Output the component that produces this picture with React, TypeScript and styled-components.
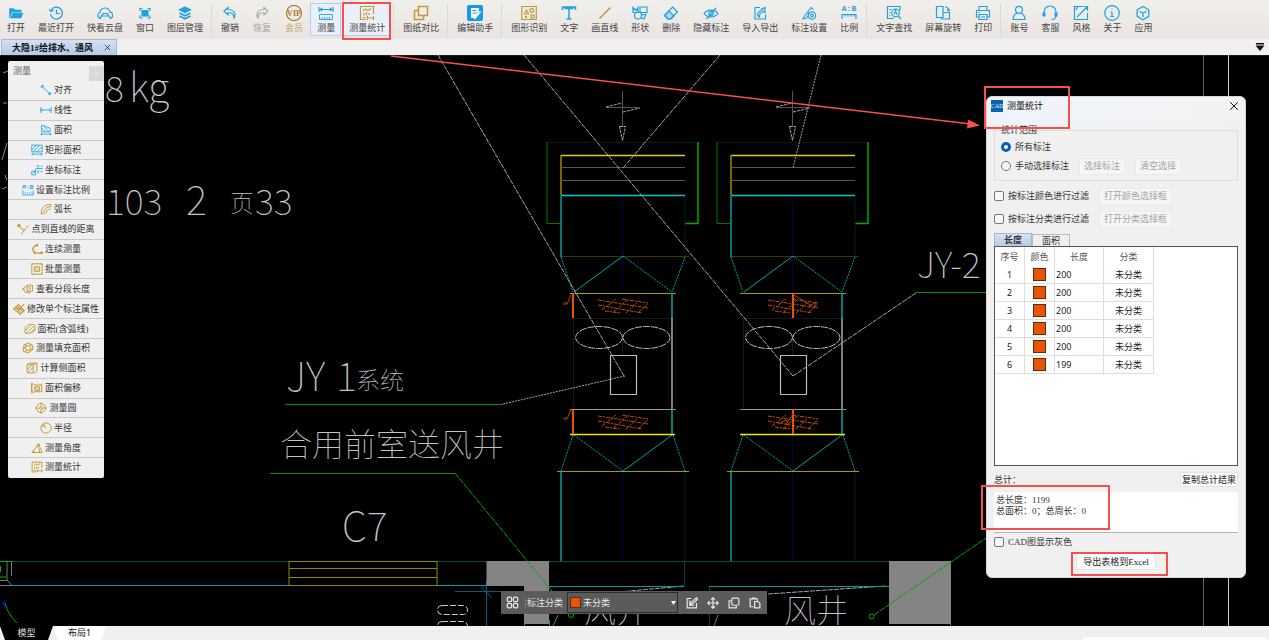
import React from 'react';
import styled, { createGlobalStyle, css } from 'styled-components';

const BLUE = '#1fa3e0';
const GOLD = '#c4993c';
const MARK = '#f4504f';

const GlobalStyle = createGlobalStyle`
  *, *::before, *::after { box-sizing: border-box; }
  body {
    margin: 0;
    background: #efefef;
    color: #333;
    font: 9px/10px "Liberation Serif", "Noto Sans CJK SC", serif;
  }
  button, input, select, textarea { font: inherit; color: inherit; margin: 0; }
`;

const Page = styled.div`
  display: flex;
  flex-direction: column;
  min-height: 100vh;
  overflow: hidden;
`;

/* ---------- top tool bar ---------- */

const Toolbar = styled.header`
  display: flex;
  align-items: flex-start;
  height: 39px;
  padding: 3px 0 0;
  background: linear-gradient(#f0efec, #ebe4e1);
`;

const ToolGroup = styled.div<{ $gap?: number }>`
  display: flex;
  gap: ${(p) => p.$gap ?? 0}px;
`;

const Divider = styled.span`
  flex: none;
  width: 1px;
  height: 34px;
  margin: 0 2px;
  background: #dcd9d6;
`;

const ToolButton = styled.button<{ $tone: string; $on?: boolean; $marked?: boolean; $label?: string }>`
  position: relative;
  display: flex;
  flex: none;
  flex-direction: column;
  align-items: center;
  gap: 2px;
  height: 33px;
  padding: 1px 5px 0 6px;
  border: 1px solid ${(p) => (p.$on ? '#b5cdec' : 'transparent')};
  background: ${(p) => (p.$on ? '#e9f0fa' : 'transparent')};
  color: ${(p) => p.$label ?? '#444'};
  white-space: nowrap;
  svg { color: ${(p) => p.$tone}; }
  ${(p) =>
    p.$marked &&
    css`
      &::after {
        content: '';
        position: absolute;
        inset: -2px -1px -5px;
        border: 2px solid ${MARK};
      }
    `}
`;

/* ---------- document tabs ---------- */

const FileTabs = styled.nav`
  display: flex;
  align-items: stretch;
  height: 16px;
  padding: 0 3px 0 1px;
  background: #f0f0f0;
`;

const FileTab = styled.div`
  display: flex;
  align-items: center;
  gap: 11px;
  padding: 0 5px 0 10px;
  border: 1px solid #a3b8d2;
  border-bottom: 0;
  background: linear-gradient(#d3e1f2, #b6cbe5);
  color: #111;
  font-weight: 700;
`;

const GlyphButton = styled.button`
  display: flex;
  align-items: center;
  justify-content: center;
  padding: 0;
  border: 0;
  background: none;
`;

const Spacer = styled.span`
  flex: 1;
`;

/* ---------- drawing area ---------- */

const Workspace = styled.main`
  position: relative;
  flex: 1;
  min-height: 571px;
  overflow: hidden;
  background: #000;
`;

const Drawing = styled.svg`
  position: absolute;
  inset: 0;
  width: 100%;
  height: 100%;
  fill: none;
  text {
    font-family: "Noto Sans CJK SC", sans-serif;
    font-weight: 100;
    fill: #c4c4c4;
  }
`;

/* ---------- measuring palette ---------- */

const Palette = styled.aside`
  position: absolute;
  left: 8px;
  top: 6px;
  display: flex;
  flex-direction: column;
  width: 96px;
  height: 417px;
  border-radius: 2px;
  background: #f0f0f0;
`;

const PaletteHead = styled.div`
  display: flex;
  flex: none;
  align-items: center;
  justify-content: space-between;
  height: 20px;
  padding-left: 5px;
  color: #666;
`;

const PaletteClose = styled.button`
  align-self: flex-end;
  width: 15px;
  height: 15px;
  padding: 0;
  border: 0;
  background: #d9d9d9;
  color: #f6f6f6;
`;

const PaletteItem = styled.button<{ $tone: string }>`
  display: flex;
  flex: 1;
  align-items: center;
  justify-content: center;
  gap: 2px;
  min-height: 0;
  padding: 0;
  border: 0;
  border-bottom: 1px solid #c9c9c9;
  background: none;
  white-space: nowrap;
  svg { flex: none; color: ${(p) => p.$tone}; }
  &:last-child { border-bottom-color: transparent; }
`;

/* ---------- statistics dialog ---------- */

const Dialog = styled.section`
  position: absolute;
  top: 41px;
  right: 23px;
  width: 260px;
  border: 1px solid #d8d8d8;
  border-radius: 6px;
  background: #f0f0f0;
`;

const DialogTitle = styled.header`
  display: flex;
  align-items: center;
  gap: 4px;
  height: 28px;
  padding: 0 6px 10px 4px;
  border-radius: 6px 6px 0 0;
  background: linear-gradient(90deg, #eef3fb, #f2f2f2);
  color: #111;
`;

const Title = styled.h1`
  flex: 1;
  margin: 0;
  font-size: 9px;
  font-weight: 400;
`;

const DialogBody = styled.div`
  display: flex;
  flex-direction: column;
  padding: 0 7px 7px;
`;

const Scope = styled.fieldset`
  display: flex;
  flex-direction: column;
  gap: 1px;
  min-width: 0;
  margin: 0 0 6px;
  padding: 3px 6px 5px;
  border: 1px solid #dedede;
  legend { padding: 0; line-height: 10px; }
`;

const Line = styled.div<{ $gapBelow?: number }>`
  display: flex;
  align-items: center;
  gap: 10px;
  height: 18px;
  margin-bottom: ${(p) => p.$gapBelow ?? 0}px;
`;

const Choice = styled.label`
  display: flex;
  align-items: center;
  gap: 4px;
`;

const Radio = styled.input.attrs({ type: 'radio' })`
  appearance: none;
  width: 10px;
  height: 10px;
  border: 1px solid #777;
  border-radius: 50%;
  background: #f6f6f6;
  &:checked { border: 3px solid #0a5fb8; background: #fff; }
`;

const Check = styled.input.attrs({ type: 'checkbox' })`
  appearance: none;
  width: 10px;
  height: 10px;
  border: 1px solid #777;
  border-radius: 2px;
  background: #f8f8f8;
`;

const PushButton = styled.button`
  height: 17px;
  padding: 0 4px;
  border: 1px solid #e4e4e4;
  border-radius: 2px;
  background: #fbfbfb;
  color: #222;
  white-space: nowrap;
  &:disabled { background: #f6f6f6; border-color: #ebebeb; color: #a3a3a3; }
`;

const CopyButton = styled(PushButton)`
  height: 15px;
  padding: 0 1px;
`;

const ExportButton = styled(PushButton)`
  width: 80px;
`;

const Tabs = styled.div`
  display: flex;
  align-items: flex-end;
  height: 13px;
`;

const Tab = styled.button<{ $active?: boolean }>`
  width: 38px;
  height: ${(p) => (p.$active ? 13 : 12)}px;
  padding: 0;
  border: 1px solid ${(p) => (p.$active ? '#a3b8d2' : '#bbb')};
  border-bottom: 0;
  background: ${(p) => (p.$active ? 'linear-gradient(#d6e3f3, #b6cbe5)' : '#efefef')};
  font-weight: ${(p) => (p.$active ? 700 : 400)};
`;

const TableBox = styled.div`
  height: 220px;
  margin-bottom: 6px;
  border: 1px solid #555;
  background: #fff;
`;

const Table = styled.table`
  table-layout: fixed;
  width: 159px;
  border-collapse: separate;
  border-spacing: 0;
  th, td {
    height: 18px;
    padding: 0;
    border-right: 1px solid #ddd;
    border-bottom: 1px solid #ddd;
    text-align: center;
    vertical-align: middle;
  }
  th { height: 19px; border-bottom: 0; font-weight: 400; color: #555; }
  td { font-family: "Noto Sans", "Noto Sans CJK SC", sans-serif; color: #222; }
  td:nth-child(3) { padding-left: 1px; text-align: left; }
`;

const Swatch = styled.span`
  display: block;
  width: 13px;
  height: 13px;
  margin: 0 auto;
  border: 1px solid #5b2a10;
  background: #e85400;
`;

const TotalLine = styled.div`
  display: flex;
  align-items: center;
  justify-content: space-between;
  height: 15px;
  margin-bottom: 5px;
`;

const Totals = styled.textarea`
  display: block;
  width: 100%;
  height: 41px;
  padding: 3px 2px;
  border: 0;
  border-bottom: 1px solid #b5b5b5;
  background: #fff;
  line-height: 11px;
  resize: none;
`;

const ExportLine = styled.div`
  display: flex;
  justify-content: center;
  margin-top: 2px;
`;

const Highlight = styled.div<{ $x: number; $y: number; $w: number; $h: number }>`
  position: absolute;
  left: ${(p) => p.$x}px;
  top: ${(p) => p.$y}px;
  width: ${(p) => p.$w}px;
  height: ${(p) => p.$h}px;
  border: 2px solid ${MARK};
  pointer-events: none;
`;

/* ---------- floating class bar ---------- */

const ClassBar = styled.div`
  position: absolute;
  left: 501px;
  bottom: 12px;
  display: flex;
  align-items: center;
  height: 23px;
  padding: 0 6px 0 5px;
  background: #5b5b5b;
  color: #e8e8e8;
`;

const ClassLabel = styled.label`
  margin: 0 4px 0 6px;
  padding-left: 1px;
  border-left: 1px solid #777;
`;

const ClassPicker = styled.div`
  display: flex;
  align-items: center;
  width: 111px;
  height: 21px;
  padding: 0 1px 0 2px;
  border: 1px solid #2e2e2e;
  ${Swatch} { flex: none; width: 11px; height: 11px; margin: 0; }
  svg { flex: none; }
`;

const ClassSelect = styled.select`
  appearance: none;
  flex: 1;
  min-width: 0;
  padding: 0 2px;
  border: 0;
  background: transparent;
`;

const BarActions = styled.div`
  display: flex;
  gap: 9px;
  margin-left: 8px;
`;

/* ---------- layout tabs ---------- */

const SheetTabs = styled.footer`
  display: flex;
  align-items: stretch;
  height: 14px;
  background: #f0f0f0;
  font-family: "Noto Sans", "Noto Sans CJK SC", sans-serif;
`;

const SheetTab = styled.button<{ $active?: boolean }>`
  width: 53px;
  padding: 0;
  border: 0;
  background: ${(p) => (p.$active ? '#000' : '#fff')};
  color: ${(p) => (p.$active ? '#ddd' : '#111')};
  clip-path: polygon(0 0, 100% 0, calc(100% - 5px) 100%, 5px 100%);
`;

const StatusPanel = styled.div`
  align-self: flex-end;
  width: 184px;
  height: 3px;
  margin-right: 2px;
  border-radius: 4px 4px 0 0;
  background: #fcfcfc;
`;

/* ---------- icons ---------- */

const Icon = ({ children, size = 16, w = 1.2 }: { children: React.ReactNode; size?: number; w?: number }) => (
  <svg width={size} height={size} viewBox="0 0 16 16" fill="none" stroke="currentColor" strokeWidth={w} aria-hidden="true">
    {children}
  </svg>
);

type Tool = { label: string; icon: React.ReactNode; tone?: string; on?: boolean; marked?: boolean; text?: string };

const statsIcon = (
  <>
    <path d="M14.500 9V1.500h-13v13H7M3.500 12.500h3" />
    <path d="M4 6l2.500-2L9 5.500l3-2M5 8v2.500M7.500 7v3.500M10 8v2" />
    <path d="M8.500 11v4M14.500 11v4M8.500 13h6" />
  </>
);

const groups: { gap?: number; tools: Tool[] }[] = [
  {
    tools: [
      { label: '打开', icon: <path fill="currentColor" d="M1.500 13V3.500h4l1.500 1.500h6v2h-9zM2.500 13l2.500-5h10l-2 5z" strokeWidth=".6" /> },
      { label: '最近打开', icon: <><path d="M3 5.500A6 6 0 1 1 2.500 9M1 4l2 2.500L5.500 5M8.500 4.500v4H12" /></> },
      { label: '快看云盘', icon: <><path d="M3.500 13.500a3.200 3.200 0 0 1-.5-6.200 5 5 0 0 1 9.800-.5 3.500 3.500 0 0 1 .7 6.700l-1.500-2.500h-8z" /><path d="M5 11l1-2.500h4.500l1 2.500" /></> },
      { label: '窗口', icon: <><path fill="currentColor" d="M5 5.500h6v5.500H5z" /><path d="M3 6V3.500h2.500M10.500 3.500H13V6M13 10.500V13h-2.500M5.500 13H3v-2.500" /></> },
      { label: '图层管理', icon: <><path fill="currentColor" d="M8 2l5.500 2.800L8 7.500 2.500 4.800z" /><path d="M2.500 8L8 10.800 13.500 8M2.500 11L8 13.800l5.500-2.800" strokeWidth="1.800" /></> },
    ],
  },
  {
    gap: 1,
    tools: [
      { label: '撤销', icon: <path d="M6 2.500L2 6.300 6 10V7.800c4-.3 6 1.200 6 5.700 2.500-5 0-9-6-9z" /> },
      { label: '恢复', tone: '#aaa', text: '#a5a5a5', icon: <path d="M10 2.500l4 3.800L10 10V7.800c-4-.3-6 1.200-6 5.700-2.500-5 0-9 6-9z" /> },
      {
        label: '会员',
        tone: '#a87a2a',
        text: '#c6a86c',
        icon: (
          <>
            <circle cx="8" cy="8" r="7.500" />
            <text x="8" y="11" textAnchor="middle" fontSize="8" fontWeight="700" fill="currentColor" stroke="none">VIP</text>
          </>
        ),
      },
      { label: '测量', on: true, icon: <><path d="M1 2v5M15 2v5M2 4.500h12M4 3L2.300 4.500 4 6M12 3l1.700 1.500L12 6" /><path d="M1.500 9.500h13v5h-13zM4 12v2M6.500 12v2M9 12v2M11.500 12v2" strokeWidth=".9" /></> },
      { label: '测量统计', tone: GOLD, on: true, marked: true, icon: statsIcon },
    ],
  },
  { tools: [{ label: '图纸对比', tone: GOLD, icon: <path d="M5.500 1.500h9v9h-9zM5 5.500H1.500v9h9V11" strokeWidth="1.500" /> }] },
  {
    tools: [
      {
        label: '编辑助手',
        icon: (
          <>
            <rect width="16" height="16" rx="2" fill="#139be3" stroke="none" />
            <path d="M4 3h8v3l-4 7H4z" fill="#fff" stroke="none" />
            <path d="M5.500 8h4M5.500 5.500h4" stroke="#139be3" />
            <path d="M13.500 6.500L8.500 12.500l-1 1.500" stroke="#fff" strokeWidth="1.600" />
          </>
        ),
      },
    ],
  },
  {
    tools: [
      { label: '图形识别', tone: GOLD, icon: <><path d="M.8 1.500h14.500v13H.8z" /><path d="M5.500 5L3.500 9h4z" /><circle cx="10.800" cy="5.500" r="1.900" /><circle cx="5" cy="12" r=".6" /><path d="M10 10h3v3h-3z" /></> },
      { label: '文字', icon: <path d="M1.500 5V2h13v3M8 2v12M5.500 14h5M3.500 3.500h9" strokeWidth="1.500" /> },
      { label: '画直线', tone: GOLD, icon: <path d="M2.500 13.500l11-11" strokeWidth="1.600" /> },
      { label: '形状', icon: <><path d="M1 2.500l3 3 2-3v5H1zM8 2h7v5.500H8z" /><circle cx="6" cy="10.500" r="3.500" /><path d="M9 10l5-.5-2 4.500-3-1" /></> },
      { label: '删除', icon: <><path d="M9.500 2l5 5-7 7H5L1.500 10.500z" /><path d="M6 6l5 5-3 3H5l-3.500-3.500z" fill="currentColor" fillOpacity=".3" /></> },
      { label: '隐藏标注', icon: <><path d="M1 8.500C4 4 12 4 15 8.500 12 13 4 13 1 8.500zM13 3L3.500 14" /><circle cx="8" cy="8.500" r="2.200" /></> },
      { label: '导入导出', icon: <path d="M8 2.500H3v11.500h10.500V9.500M5.500 10.500l2 1.500c-.5-3 1-4.500 4-5.500l1.500 1V2.500L9.500 4l1 1C7 6 5.500 7.500 5.500 10.500z" /> },
      { label: '标注设置', icon: <><path d="M1.500 14L10 2.500l2.500 2M1.500 14l3.500-.5L7.500 10M6.500 7.500l2 1.500" /><circle cx="11" cy="10.500" r="3.700" /><circle cx="11" cy="10.500" r="1.300" /></> },
      {
        label: '比例',
        icon: (
          <>
            <text x="8" y="6" textAnchor="middle" fontSize="8" fontWeight="700" fill="currentColor" stroke="none" fontFamily="Liberation Mono">A:B</text>
            <path d="M1 14V9.500h14V14M4 10v1.500M7 10v1.500M10 10v1.500M13 10v1.500" />
          </>
        ),
      },
    ],
  },
  {
    tools: [
      { label: '文字查找', icon: <><path d="M8 13.500H1.500v-12h12.500V6M3.500 4.500h2M3.500 7.500h1M3.500 10.500h1" /><circle cx="9.500" cy="8" r="3.800" /><path d="M12.300 11l2.700 3M8 9.800l1.500-4 1.500 4" /></> },
      { label: '屏幕旋转', icon: <path d="M1.500 1.500h6.500v11H1.500zM8 7.500h6.500v6.500H6.500v-1.500M10 2c2 0 3.500 1 3.500 3.500M12 4.500L13.500 6 15 4.500" /> },
      { label: '打印', icon: <><path d="M4 5.500v-4h8v4M4 12H1.500V5.500h13V12H12" /><path d="M4 9.500h8v5H4zM6 12h4M3.500 7.500h1.500" /></> },
    ],
  },
  {
    tools: [
      { label: '账号', icon: <><circle cx="8" cy="4.800" r="3.500" /><path d="M6 8C3 9.500 2 11.500 2 14.500h12C14 11.500 13 9.500 10 8" /></> },
      { label: '客服', icon: <><path d="M2 9.500V7a6 6 0 0 1 12 0v4c0 2-2 3.500-4.500 3.500" /><path d="M2 7.500v4M14 7.500v4" strokeWidth="3" /></> },
      { label: '风格', icon: <path d="M14.500 8v6.500h-13v-13H10M4 12l10-10M10.500 1.500h4v4.500M5 1.500L3 5" /> },
      { label: '关于', icon: <><circle cx="8" cy="8" r="7.300" /><path d="M8 7v4.500M6.500 7H8M6.500 11.500h3.500M7.500 4h1" /></> },
      { label: '应用', icon: <path d="M8 1.500l5.800 3.300v6.600L8 14.700l-5.800-3.300V4.800zM4.500 6.200L8 8.200l3.500-2M8 8.200V12" strokeWidth="1.300" /> },
    ],
  },
];

const palette: { label: string; icon: React.ReactNode; gold?: boolean }[] = [
  { label: '对齐', icon: <><path d="M3 3.500l10 9.500M1 5l3.500-3.500M11 15l4-4" /><circle cx="3" cy="3" r="1.200" fill="currentColor" /><circle cx="13" cy="13" r="1.200" fill="currentColor" /></> },
  { label: '线性', icon: <path d="M1 4v8M15 4v8M1 8h14M4 6.500L2 8l2 1.500M12 6.500L14 8l-2 1.500" /> },
  { label: '面积', icon: <path d="M2 10.500v-9l11.500 4v5zM2 5l5 5.500M5 3l7 7M1 13.500h14M3 12l-2 1.500L3 15M13 12l2 1.500-2 1.500" /> },
  { label: '矩形面积', icon: <path d="M1 1.500h14v9H1zM1 8l6.500-6.500M3 10.500l9-9M8 10.500l7-7M1 13.500h14M3 12l-2 1.500L3 15M13 12l2 1.500-2 1.500" /> },
  { label: '坐标标注', icon: <path d="M1 14.500h5v-5H1zM3.500 12L7 6h8.500M8 1.500l3 3M11 1.500l-3 3M13 3h2.500M8 8.500l1.500 2 1.500-2M9.500 10.500v2.500M13 10h2.500" /> },
  { label: '设置标注比例', icon: <path d="M1.500 6V2h3v4M1.500 4h3M8 2.500v1M8 5v1M11 2h3.500v4H11zM11 4h3.500M1 8.500v6h14v-6M4 11v1.500M7 11v1.500M10 11v1.500M13 11v1.500" /> },
  { label: '弧长', gold: true, icon: <path d="M1.500 14.500C1.500 6 6 2 14.500 2v3C8.500 5 5 8 5 14.500zM8 14c0-4 2-5.500 6-6" /> },
  { label: '点到直线的距离', gold: true, icon: <><path d="M5.500 15L15 3.500M3 4l5.500 6" /><circle cx="2.500" cy="3.500" r="1.700" fill="currentColor" /><path d="M8 7.500l2 2" /></> },
  { label: '连续测量', gold: true, icon: <><path d="M8 2.500C2 4.500 1 10 5 13M7 13.500h7" strokeWidth="1.800" /><circle cx="8" cy="3" r="1.300" fill="currentColor" /><circle cx="5" cy="13" r="1.300" fill="currentColor" /><circle cx="14" cy="13" r="1.300" fill="currentColor" /></> },
  { label: '批量测量', gold: true, icon: <><path d="M1 1h14v14H1z" strokeDasharray="2.500 1" strokeWidth="1.800" /><path d="M4.500 5h7v6h-7zM4.500 9l4-4M7 11l4.500-4.500" /></> },
  { label: '查看分段长度', gold: true, icon: <><path d="M7 3h7v8H7zM7 3L1.500 7.500 5 13l4.500-2M9 5.500h3M9 8h3" /><circle cx="2" cy="8" r="1" /><circle cx="9" cy="12.500" r="1.300" /></> },
  { label: '修改单个标注属性', gold: true, icon: <path d="M1 8l6-6 8 8-5 5zM4 6.500l6 6M6.500 4.500l6.500 6.500M14.500 1.500L8 9l-3-3" strokeWidth="1.500" /> },
  { label: '面积(含弧线)', gold: true, icon: <path d="M1.500 13.500V6C5 1.500 10 1 14.500 3v6.500c-3 4-8 5-13 4zM2 10l7-7M4 13l9-9M9 13l5-5" /> },
  { label: '测量填充面积', gold: true, icon: <><path d="M3 3.500l6-2 5.500 3-.5 6-6 4-6-2-.5-5z" /><circle cx="8" cy="8" r="3.200" /><path d="M2 10l4-7M10 2l3 4M4 13l3-2M10 12l4-4" /></> },
  { label: '计算侧面积', gold: true, icon: <path d="M1.500 3.500l3-2h10v11l-3 2h-10zM1.500 3.500h8v11M9.500 3.500l5-2M2 10l6-6M3 13.500l6-6" /> },
  { label: '面积偏移', gold: true, icon: <path d="M1 1.500l3.500 2.500h10v9H4L1 15zM5 6.500h6.500v4.500H5zM1 1.500v12M5 9l3-2.500M8 11l3-3M13 4l2-2" /> },
  { label: '测量圆', gold: true, icon: <><circle cx="8" cy="8" r="6" /><path d="M8 .5v3M8 12.500v3M.5 8h3M12.500 8h3M5 9l4-4M7 11.500l4.500-4.500" strokeWidth="1.500" /></> },
  { label: '半径', gold: true, icon: <><circle cx="8" cy="8" r="6.800" /><path d="M8.500 8.500L4 4M4 7V4h3" /></> },
  { label: '测量角度', gold: true, icon: <><path d="M15 14H1.500L10 2.500l5 11.500M7.500 6c3 1.500 4 4 4 8" /><circle cx="10" cy="4" r="1.300" /><circle cx="3" cy="13" r="1.200" /></> },
  { label: '测量统计', gold: true, icon: statsIcon },
];

/* ---------- drawing content ---------- */

const Hatch = ({ y }: { y: number }) => (
  <g stroke="#c24a08" strokeDasharray="4 1 2 1">
    <path d={`M598 ${y}l50 8M598 ${y + 5}l44 8M605 ${y + 11}l16 2M622 ${y - 1}l26 4`} />
    <path d={`M602 ${y + 10}l14-11M613 ${y + 13}l14-13M626 ${y + 13}l13-12M638 ${y + 13}l10-9`} />
  </g>
);

const Duct = ({ dx, stemX, label }: { dx: number; stemX: number; label: string }) => (
  <g transform={`translate(${dx} 0)`} aria-label={label}>
    <path stroke="#555" d="M622.500 91v35M606 107.500h33" />
    <path stroke="#aaa" d="M606 107l16-4M623 112l17-4M619.500 126.500h6l-3 14z" strokeDasharray="3 1" />
    <path stroke="#002400" d="M547 142.500h151" />
    <path stroke="#007800" d="M547 142v81.500h14" />
    <path stroke="#00a800" d="M698 142v81.500h-13" strokeWidth="1.500" />
    <path stroke="#555" d="M562 167.500h123M562 180.500h123" />
    <path stroke="#dcd200" d="M561 155.500h124" strokeWidth="1.300" />
    <path stroke="#978b00" d="M561 155v40" strokeWidth="1.500" />
    <path stroke="#05053c" d="M622.500 196v96M622.500 435v126" />
    <path stroke="#3b3800" d="M561 256.500h128" />
    <path stroke="#001c1c" d="M685 196v60M685 471v90" />
    <path stroke="#00c6c6" d="M561 195.500h124" strokeWidth="1.300" />
    <path stroke="#009d9d" d="M561 196v61M561 471v90" strokeWidth="1.500" />
    <path stroke="#00a5a5" strokeDasharray="2 1" d="M561 257l12 35M685 257l-13 35M573 435l-12 36M673 435l12 36M623 256l49 36M574 435l49 36" />
    <path stroke="#00a5a5" d="M574 292l49-36M623 471l49-36" />
    <path stroke="#a49d00" d="M570 293.500h106M557 471.500h132M570 409.500h106" />
    <path stroke="#00a5a5" d="M672 293v25M672 409v25" strokeWidth="1.500" />
    <path stroke="#181818" d="M573.500 318v91M573 318.500h99M622.500 338v17" />
    <path stroke="#aaa" d="M672 318v91" strokeWidth="1.500" />
    <path stroke="#999" d="M574 409.500h98" />
    <path stroke="#eee800" d="M570 434.500h105" strokeWidth="1.500" />
    <g stroke="#bbb">
      <ellipse cx="599" cy="337.500" rx="23.500" ry="11" strokeDasharray="7 1" />
      <ellipse cx="646.500" cy="337.500" rx="23.500" ry="11" strokeDasharray="7 1" />
      <path d="M610.500 355.500h26v39h-26z" strokeWidth="1.200" />
    </g>
    <Hatch y={300} />
    <Hatch y={416} />
    <path stroke="#ff5a0a" d={`M${stemX} 293v25M${stemX} 409v25`} strokeWidth="1.800" />
  </g>
);

const Plan = () => (
  <Drawing viewBox="0 55 1269 571" preserveAspectRatio="xMinYMin slice">
    <path stroke="#1c1c24" d="M0 55.500h1269" />
    <text x="105" y="102" fontSize="36">8</text>
    <text x="129" y="102" fontSize="40">k</text>
    <text x="148" y="102" fontSize="40">g</text>
    <text x="106" y="215" fontSize="36">103</text>
    <text x="186" y="215" fontSize="40">2</text>
    <text x="230" y="212" fontSize="24">页</text>
    <text x="255" y="215" fontSize="36">33</text>
    <text x="286" y="391" fontSize="40">JY</text>
    <text x="336" y="391" fontSize="40">1</text>
    <text x="356" y="389" fontSize="24">系统</text>
    <text x="280" y="456" fontSize="32">合用前室送风井</text>
    <text x="342" y="541" fontSize="40">C7</text>
    <text x="917" y="278" fontSize="36">JY-2</text>
    <text x="584" y="622" fontSize="32">风井</text>
    <text x="784" y="622" fontSize="32">风井</text>

    <Duct dx={0} stemX={573} label="JY-1" />
    <Duct dx={170} stemX={623} label="JY-2" />
    <path stroke="#b24408" d="M563 304h4l-2-2M567 304l4-9M563 419h4l-2-2M567 419l4-9M794 295l18 11M808 307l8-5-2 6M778 424l8-4 3 5M786 424l7-10" />

    <g stroke="#a5a5a5" strokeDasharray="5 1">
      <path d="M438 55l186 321M524 55l269 321M720 55l-97 113M793 376l123-83" />
      <path d="M821 55l-28 113M625 376l-122 28" strokeDasharray="2 1" />
      <path d="M619 592l65-6M768 594l117-8" />
    </g>
    <path stroke="#008f00" d="M285 404.500h218M916 292.500h70M270 473.500h185" />
    <path stroke="#5f5f5f" d="M1203.500 55v571" />
    <path stroke="#ccc" d="M1228.500 55v571" />

    <path stroke="#004848" d="M0 561.500h951M709.500 586v40M684.500 561v25" />
    <path stroke="#009c9c" d="M12 585.500h474M549 586.500h135M709 586.500h180M524.500 620v6M549.500 620v6M950.500 620v6" />
    <path stroke="#00607c" d="M455 591.500h46M486.500 580v46M480 585l12 13" />
    <path stroke="#8f8800" d="M289 561v25M437 561v25M289 568.500h148M289 577.500h148M289 585.500h148M289 561.500h148" />
    <path fill="#848484" d="M486.500 561H549v63h-25v-38h-37.500zM889 561h62v63h-62z" />
    <path stroke="#00a800" strokeDasharray="6 1" d="M455 473l115 140M874 615l112-77" />
    <circle cx="571" cy="615" r="2.500" stroke="#00a800" />
    <circle cx="871.500" cy="616.500" r="2.500" stroke="#00a800" />
    <g stroke="#ccc" strokeDasharray="6 2">
      <rect x="437.500" y="605.500" width="30" height="9" rx="4.500" />
      <rect x="437.500" y="621.500" width="30" height="9" rx="4.500" />
    </g>
    <path stroke="#777" d="M0 580.500h7v-20M7 580l5 5.500M0 585.500h12M11.500 561v15M558 615l-5 11M718 615l-4 11" />
    <path stroke="#00b000" d="M0 561.500h12M.5 566v6M0 577h6M5 603c2 8 6 14 12 20" />
    <path stroke="#0000f0" d="M4 601v5" strokeWidth="2" />
    <path stroke="#888" d="M2 160l5-17M5 175l2 5M2 189l5-2M3 73l5-2M3 103h4" />
    <path stroke={MARK} strokeWidth="1.500" d="M391 56l580 68" />
    <path fill={MARK} d="M980 125.500l-12-6-1 9z" />
  </Drawing>
);

const lengths = [200, 200, 200, 200, 200, 199];

const CloseCross = ({ size, w = 1.6 }: { size: number; w?: number }) => (
  <Icon size={size} w={w}>
    <path d="M2 2l12 12M14 2L2 14" />
  </Icon>
);

const StatsDialog = () => (
  <Dialog role="dialog" aria-label="测量统计">
    <DialogTitle>
      <svg width="12" height="12" viewBox="0 0 12 12" aria-hidden="true">
        <rect width="12" height="12" fill="#0d62ad" />
        <text x="6" y="8" textAnchor="middle" fontSize="6" fill="#e6f3ff">CAD</text>
      </svg>
      <Title>测量统计</Title>
      <GlyphButton aria-label="关闭"><CloseCross size={10} /></GlyphButton>
    </DialogTitle>
    <DialogBody>
      <Scope>
        <legend>统计范围</legend>
        <Line><Choice><Radio name="scope" defaultChecked />所有标注</Choice></Line>
        <Line>
          <Choice><Radio name="scope" />手动选择标注</Choice>
          <PushButton disabled>选择标注</PushButton>
          <PushButton disabled>清空选择</PushButton>
        </Line>
      </Scope>
      <Line $gapBelow={5}>
        <Choice><Check />按标注颜色进行过滤</Choice>
        <PushButton disabled>打开颜色选择框</PushButton>
      </Line>
      <Line $gapBelow={5}>
        <Choice><Check />按标注分类进行过滤</Choice>
        <PushButton disabled>打开分类选择框</PushButton>
      </Line>
      <Tabs role="tablist">
        <Tab role="tab" aria-selected $active>长度</Tab>
        <Tab role="tab">面积</Tab>
      </Tabs>
      <TableBox>
        <Table>
          <colgroup>
            <col width="30" />
            <col width="30" />
            <col width="49" />
            <col width="50" />
          </colgroup>
          <thead>
            <tr><th>序号</th><th>颜色</th><th>长度</th><th>分类</th></tr>
          </thead>
          <tbody>
            {lengths.map((value, i) => (
              <tr key={i}><td>{i + 1}</td><td><Swatch /></td><td>{value}</td><td>未分类</td></tr>
            ))}
          </tbody>
        </Table>
      </TableBox>
      <TotalLine>
        <label htmlFor="totals">总计：</label>
        <CopyButton>复制总计结果</CopyButton>
      </TotalLine>
      <Totals id="totals" readOnly defaultValue={'总长度：1199\n总面积：0；总周长：0'} />
      <Line><Choice><Check />CAD图显示灰色</Choice></Line>
      <ExportLine><ExportButton>导出表格到Excel</ExportButton></ExportLine>
    </DialogBody>
    <Highlight $x={-3} $y={-11} $w={86} $h={43} />
    <Highlight $x={-6} $y={388} $w={129} $h={45} />
    <Highlight $x={84} $y={455} $w={97} $h={24} />
  </Dialog>
);

export default function App() {
  return (
    <Page>
      <GlobalStyle />
      <Toolbar>
        {groups.map((group, g) => (
          <React.Fragment key={g}>
            {g > 0 && <Divider />}
            <ToolGroup $gap={group.gap}>
              {group.tools.map((t) => (
                <ToolButton key={t.label} $tone={t.tone ?? BLUE} $on={t.on} $marked={t.marked} $label={t.text}>
                  <Icon>{t.icon}</Icon>
                  {t.label}
                </ToolButton>
              ))}
            </ToolGroup>
          </React.Fragment>
        ))}
      </Toolbar>
      <FileTabs>
        <FileTab>
          大隐1#给排水、通风
          <GlyphButton aria-label="关闭图纸"><CloseCross size={7} /></GlyphButton>
        </FileTab>
        <Spacer />
        <GlyphButton aria-label="图纸列表">
          <svg width="12" height="10" viewBox="0 0 12 10"><path d="M2 1h8v1.500H2zM1.500 3.500h9L6 9z" fill="#111" /></svg>
        </GlyphButton>
      </FileTabs>
      <Workspace>
        <Plan />
        <Palette>
          <PaletteHead>
            测量
            <PaletteClose aria-label="关闭">×</PaletteClose>
          </PaletteHead>
          {palette.map((p) => (
            <PaletteItem key={p.label} $tone={p.gold ? GOLD : '#3aaee6'}>
              <Icon size={12} w={1.300}>{p.icon}</Icon>
              {p.label}
            </PaletteItem>
          ))}
        </Palette>
        <ClassBar>
          <Icon size={13} w={1.500}>
            <rect x="1.500" y="1.500" width="5.500" height="5.500" rx="2" />
            <rect x="9" y="1.500" width="5.500" height="5.500" rx="2" />
            <rect x="1.500" y="9" width="5.500" height="5.500" rx="2" />
            <rect x="9" y="9" width="5.500" height="5.500" rx="2" />
          </Icon>
          <ClassLabel htmlFor="mark-class">标注分类</ClassLabel>
          <ClassPicker>
            <Swatch />
            <ClassSelect id="mark-class"><option>未分类</option></ClassSelect>
            <svg width="5" height="4" viewBox="0 0 5 4"><path d="M0 0h5L2.500 4z" fill="#fff" /></svg>
          </ClassPicker>
          <BarActions>
            <GlyphButton aria-label="编辑"><Icon size={12} w={1.600}><path d="M7 2H1.500v12.500H14V8M5 4.500v6.500h6M6 10l1-3 7-6 1.500 2L9 9z" /></Icon></GlyphButton>
            <GlyphButton aria-label="移动"><Icon size={12} w={1.600}><path d="M8 1v14M1 8h14M5.500 3.500L8 1l2.500 2.500M5.500 12.500L8 15l2.500-2.500M3.500 5.500L1 8l2.500 2.500M12.500 5.500L15 8l-2.500 2.500" /></Icon></GlyphButton>
            <GlyphButton aria-label="复制"><Icon size={12} w={1.600}><rect x="5" y="1.500" width="9.500" height="9.500" rx="2" /><path d="M4 5H1.500v9.500H11V12" /></Icon></GlyphButton>
            <GlyphButton aria-label="粘贴"><Icon size={12} w={1.600}><path d="M6 13H1.500V2.500H11V5M4 1.500h4.500M7.500 6h4.500l2.500 2.500v6h-7z" /></Icon></GlyphButton>
          </BarActions>
        </ClassBar>
        <StatsDialog />
      </Workspace>
      <SheetTabs>
        <SheetTab $active>模型</SheetTab>
        <SheetTab>布局1</SheetTab>
        <Spacer />
        <StatusPanel />
      </SheetTabs>
    </Page>
  );
}
